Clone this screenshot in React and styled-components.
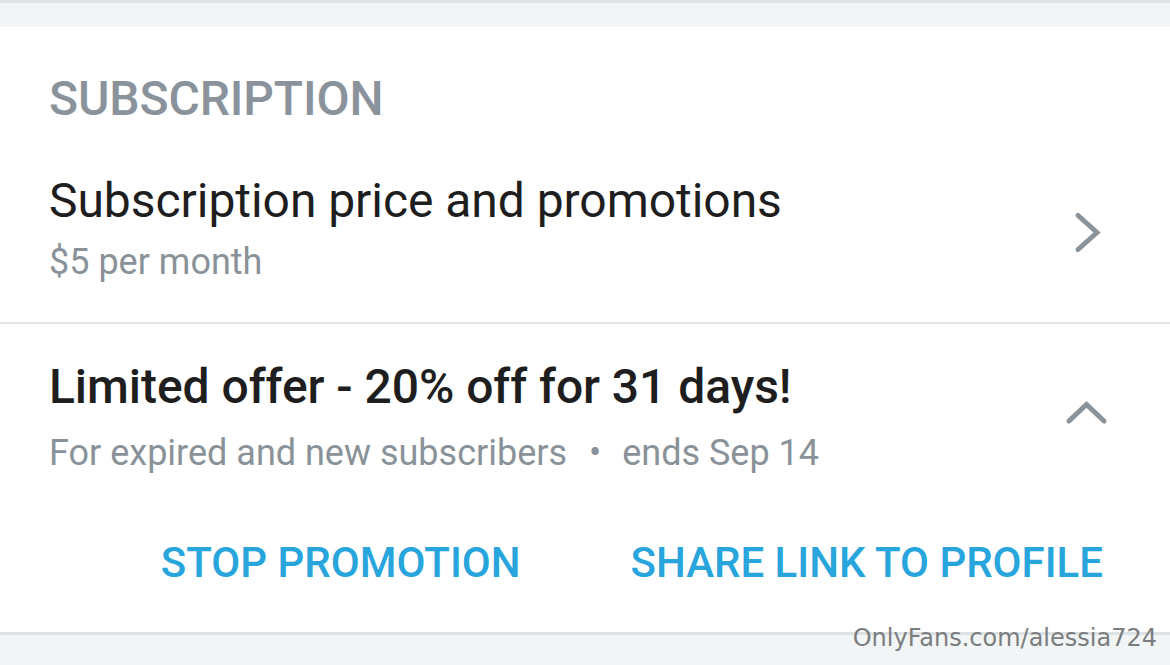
import React from "react";
import styled, { createGlobalStyle } from "styled-components";

const Global = createGlobalStyle`
  html, body { margin: 0; padding: 0; background: #f1f5f6; }
  body { font-family: Roboto, "Liberation Sans", sans-serif; -webkit-font-smoothing: antialiased; }
`;

const Page = styled.div`
  position: relative;
  width: 1170px;
  height: 665px;
  overflow: hidden;
  background: #f1f5f6;
  border-top: 3px solid #dfe4e6;
  box-sizing: border-box;
`;

const Card = styled.section`
  margin-top: 24px;
  background: #ffffff;
  border-bottom: 3px solid #dde2e4;
`;

const SectionTitle = styled.h2`
  margin: 0;
  padding: 44px 0 0 49px;
  font-size: 48px;
  line-height: 56px;
  font-weight: 500;
  color: #8a939c;
  letter-spacing: -0.1px;
`;

const Row = styled.div`
  display: flex;
  align-items: center;
  padding: ${(p) => p.$pad};
  padding-left: 49px;
  padding-right: 62px;
  border-bottom: ${(p) => (p.$divider ? "2px solid #e3e5e6" : "none")};
`;

const RowText = styled.div`
  flex: 1;
  display: flex;
  flex-direction: column;
`;

const RowTitle = styled.div`
  font-size: 48px;
  line-height: 56px;
  font-weight: ${(p) => (p.$bold ? 500 : 400)};
  color: #1e1e1e;
  letter-spacing: -0.05px;
`;

const RowSub = styled.div`
  margin-top: ${(p) => p.$gap}px;
  font-size: 36px;
  line-height: 44px;
  color: #8a9299;
`;

const Dot = styled.span`
  margin: 0 21px 0 22px;
`;

const Icon = styled.svg`
  flex: none;
  width: 48px;
  height: 56px;
  overflow: visible;
`;

const Actions = styled.div`
  display: flex;
  justify-content: flex-end;
  gap: 110px;
  padding: 63px 67px 44px 0;
`;

const ActionButton = styled.button`
  border: none;
  background: none;
  padding: 0;
  font-family: Roboto, "Liberation Sans", sans-serif;
  font-size: 42px;
  line-height: 50px;
  font-weight: 500;
  color: #28a5dc;
  text-transform: uppercase;
  cursor: pointer;
`;

const Watermark = styled.div`
  position: absolute;
  right: 13px;
  top: 621px;
  font-family: "DejaVu Sans", sans-serif;
  font-size: 24px;
  line-height: 28px;
  color: #7b7d7e;
`;

export default function App() {
  return (
    <>
      <Global />
      <Page>
        <Card>
          <SectionTitle>SUBSCRIPTION</SectionTitle>
          <Row $pad="46px 0 38px" $divider>
            <RowText>
              <RowTitle>Subscription price and promotions</RowTitle>
              <RowSub $gap={11}>$5 per month</RowSub>
            </RowText>
            <Icon viewBox="0 0 48 56">
              <path d="M18 14.5 L37 31.5 L18 48.5" fill="none" stroke="#8a929a" strokeWidth="5" strokeLinecap="round" strokeLinejoin="miter" />
            </Icon>
          </Row>
          <Row $pad="35px 0 0">
            <RowText>
              <RowTitle $bold>Limited offer - 20% off for 31 days!</RowTitle>
              <RowSub $gap={16}>
                For expired and new subscribers<Dot>•</Dot>ends Sep 14
              </RowSub>
            </RowText>
            <Icon viewBox="0 0 48 56">
              <path d="M9 32 L26.5 15.5 L44 32" fill="none" stroke="#8a929a" strokeWidth="5" strokeLinecap="round" strokeLinejoin="miter" />
            </Icon>
          </Row>
          <Actions>
            <ActionButton>Stop promotion</ActionButton>
            <ActionButton>Share link to profile</ActionButton>
          </Actions>
        </Card>
        <Watermark>OnlyFans.com/alessia724</Watermark>
      </Page>
    </>
  );
}
